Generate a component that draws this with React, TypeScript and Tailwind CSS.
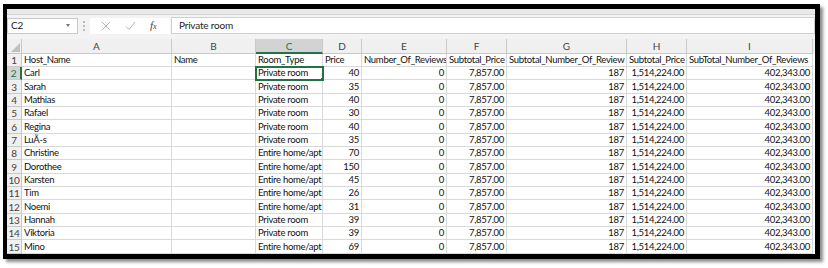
import React from "react";

const letters = ["A", "B", "C", "D", "E", "F", "G", "H", "I"];
const header = [
  "Host_Name",
  "Name",
  "Room_Type",
  "Price",
  "Number_Of_Reviews",
  "Subtotal_Price",
  "Subtotal_Number_Of_Review",
  "Subtotal_Price",
  "SubTotal_Number_Of_Reviews",
];
const data: [string, string, string][] = [
  ["Carl", "Private room", "40"],
  ["Sarah", "Private room", "35"],
  ["Mathias", "Private room", "40"],
  ["Rafael", "Private room", "30"],
  ["Regina", "Private room", "40"],
  ["LuÃ-s", "Private room", "35"],
  ["Christine", "Entire home/apt", "70"],
  ["Dorothee", "Entire home/apt", "150"],
  ["Karsten", "Entire home/apt", "45"],
  ["Tim", "Entire home/apt", "26"],
  ["Noemi", "Entire home/apt", "31"],
  ["Hannah", "Private room", "39"],
  ["Viktoria", "Private room", "39"],
  ["Mino", "Entire home/apt", "69"],
];

const gridCols =
  "grid grid-cols-[15px_150px_84px_67px_39px_85px_60px_120px_60px_126px]";

function Cell({
  children,
  right,
  cls = "",
}: {
  children?: React.ReactNode;
  right?: boolean;
  cls?: string;
}) {
  return (
    <div
      className={
        "border-r border-b border-[#d9d9d9] overflow-hidden whitespace-nowrap px-[2px] leading-none flex items-center text-[#111] " +
        (right ? "justify-end " : "justify-start ") +
        cls
      }
    >
      {children}
    </div>
  );
}

export default function App() {
  return (
    <div className="w-[828px] h-[268px] bg-white relative font-['Lato',sans-serif]">
      <div className="absolute left-[3px] top-[4px] w-[817px] h-[255px] border-black border-t-[5px] border-l-[4px] border-r-[5px] border-b-[5px] shadow-[3px_3px_3px_rgba(0,0,0,0.45)] overflow-hidden bg-white">
        {/* ribbon strip */}
        <div className="h-[6px] bg-[#e8e8e8] border-b border-[#d4d4d4]" />
        {/* formula bar */}
        <div className="h-[21px] bg-[#f3f3f3] flex items-center">
          <div className="w-[71px] h-[16px] bg-white border border-[#c8c8c8] flex items-center pl-[3px] text-[10px] tracking-[-0.2px] text-[#222] relative">
            C2
            <span className="absolute right-[7px] top-[5px] w-0 h-0 border-l-[2.5px] border-r-[2.5px] border-t-[3px] border-l-transparent border-r-transparent border-t-[#777]" />
          </div>
          <div className="ml-[5px] flex flex-col gap-[2px] items-center">
            <span className="w-[2px] h-[2px] bg-[#bbb]" />
            <span className="w-[2px] h-[2px] bg-[#bbb]" />
            <span className="w-[2px] h-[2px] bg-[#bbb]" />
          </div>
          <div className="ml-[5px] w-[80px] h-[16px] bg-white flex items-center">
            <svg width="10" height="10" viewBox="0 0 10 10" className="ml-[11px]">
              <path d="M1 1L9 9M9 1L1 9" stroke="#b5b5b5" strokeWidth="1" fill="none" />
            </svg>
            <svg width="11" height="10" viewBox="0 0 11 10" className="ml-[14px]">
              <path d="M1 5.5L4 8.5L10 1" stroke="#b5b5b5" strokeWidth="1" fill="none" />
            </svg>
            <span className="ml-[14px] text-[11px] italic font-['Liberation_Serif',serif] text-[#444] leading-none">
              f<span className="text-[8px]">x</span>
            </span>
          </div>
          <div className="ml-[1px] flex-1 h-[17px] bg-white border border-[#d0d0d0] flex items-center pl-[7px] text-[10px] tracking-[-0.2px] text-[#222]">
            Private room
          </div>
        </div>
        <div className="h-[3px] bg-[#f3f3f3]" />
        {/* column headers */}
        <div className={gridCols + " h-[15px] bg-[#f0f0f0] text-[10px] text-[#444]"}>
          <div className="border-r border-b border-[#c9c9c9] relative">
            <span className="absolute right-[1px] bottom-[1px] w-0 h-0 [border-bottom:9px_solid_#c0c0c0] [border-left:9px_solid_transparent]" />
          </div>
          {letters.map((l) => (
            <div
              key={l}
              className={
                "border-r flex items-center justify-center leading-none " +
                (l === "C"
                  ? "bg-[#d3d3d3] border-b-2 border-b-[#217346] border-r-[#c9c9c9] text-[#217346]"
                  : "border-b border-[#c9c9c9]")
              }
            >
              {l}
            </div>
          ))}
        </div>
        {/* rows */}
        <div className="text-[9.5px] tracking-[-0.3px]">
          {[header, ...data.map((d) => d)].map((r, idx) => {
            const rowNum = idx + 1;
            const h = idx % 3 === 2 ? "h-[14px]" : "h-[13px]";
            const isHeader = idx === 0;
            const vals: string[] = isHeader
              ? (r as string[])
              : [r[0], "", r[1], r[2], "0", "7,857.00", "187", "1,514,224.00", "402,343.00"];
            return (
              <div key={idx} className={gridCols + " " + h}>
                <div
                  className={
                    "border-b flex items-center justify-center leading-none text-[#444] text-[10px] tracking-[-0.2px] " +
                    (rowNum === 2
                      ? "bg-[#d3d3d3] border-r-2 border-r-[#217346] border-b-[#c9c9c9] text-[#217346]"
                      : "bg-[#f0f0f0] border-r border-[#c9c9c9]")
                  }
                >
                  {rowNum}
                </div>
                {vals.map((v, ci) => {
                  const right = !isHeader && ci >= 3;
                  const sel = rowNum === 2 && ci === 2;
                  return (
                    <Cell key={ci} right={right} cls={sel ? "relative outline outline-2 outline-[#217346] -outline-offset-1 z-10" : ""}>
                      {v}
                      {sel && (
                        <span className="absolute right-[-3px] bottom-[-3px] w-[5px] h-[5px] bg-[#217346] border border-white" />
                      )}
                    </Cell>
                  );
                })}
              </div>
            );
          })}
        </div>
      </div>
    </div>
  );
}
